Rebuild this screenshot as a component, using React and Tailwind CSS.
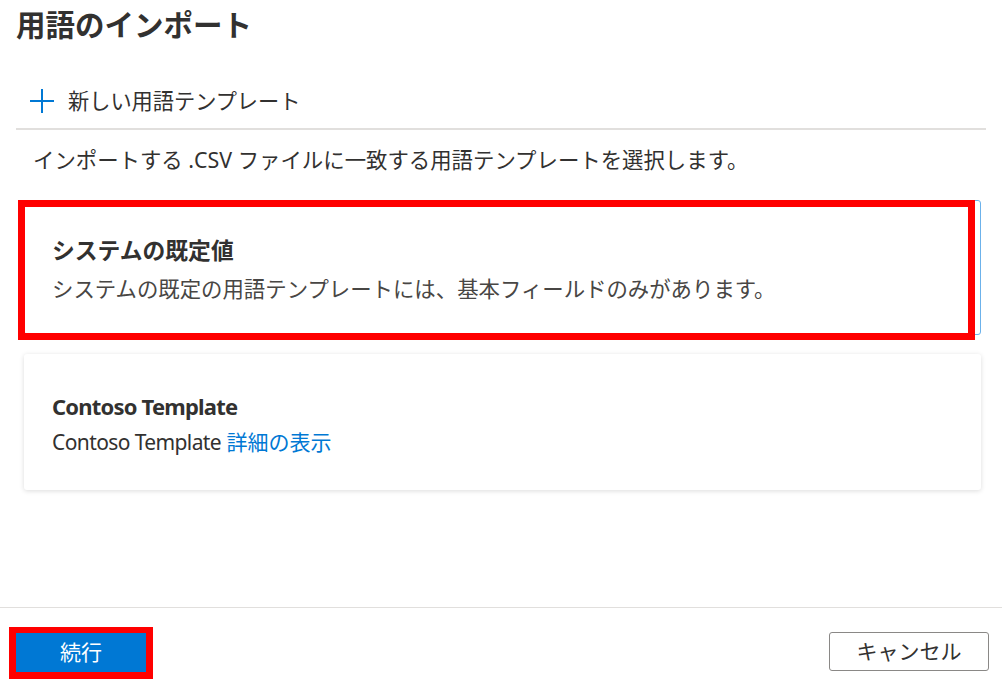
export default function App() {
  const font = { fontFamily: '"Noto Sans", "Noto Sans CJK JP", sans-serif' }

  return (
    <div
      className="w-[1002px] h-[700px] bg-white flex flex-col text-[#323130] overflow-hidden"
      style={font}
    >
      {/* Header */}
      <div className="px-4 pt-[5px]">
        <h1 className="text-[29.5px] leading-[40px] font-bold">用語のインポート</h1>
      </div>

      {/* New template */}
      <div className="mx-4 mt-[41px] border-b-2 border-[#e1dfdd] pb-[12px]">
        <button className="flex items-center gap-[14px] pl-[14px] h-[30px] text-[21.2px] text-[#323130]">
          <svg width="24" height="24" viewBox="0 0 24 24" className="shrink-0">
            <path d="M12 0v24M0 12h24" stroke="#0078d4" strokeWidth="2" fill="none" />
          </svg>
          <span className="leading-[30px]">新しい用語テンプレート</span>
        </button>
      </div>

      <p className="px-[33px] mt-[15px] text-[21.4px] leading-[30px] text-[#323130]">
        インポートする .CSV ファイルに一致する用語テンプレートを選択します。
      </p>

      {/* Cards */}
      <div className="pl-[24px] pr-[21px] mt-[25px] flex flex-col gap-[19px]">
        <div className="relative bg-white border border-[#6cb2eb] rounded-[3px] px-[27px] pt-[35px] pb-[30px]">
          <div className="text-[22.8px] leading-[30px] font-bold">システムの既定値</div>
          <div className="text-[21.4px] leading-[30px] mt-[8px] text-[#484644]">
            システムの既定の用語テンプレートには、基本フィールドのみがあります。
          </div>
          <div className="absolute left-[-7px] right-[5px] top-[-1px] bottom-[-6px] border-[7px] border-[#ff0000] pointer-events-none" />
        </div>

        <div className="bg-white rounded-[3px] shadow-[0_1px_5px_rgba(0,0,0,0.14)] px-[28px] pt-[37px] pb-[33px]">
          <div className="text-[22px] leading-[30px] font-bold tracking-[-0.8px]">Contoso Template</div>
          <div className="text-[21px] leading-[30px] mt-[6px] text-[#323130]">
            <span className="tracking-[-0.6px]">Contoso Template</span>{' '}
            <span className="text-[#0078d4]">詳細の表示</span>
          </div>
        </div>
      </div>

      {/* Footer */}
      <div className="mt-auto border-t border-[#e1dfdd] h-[93px] flex items-start justify-between pl-[9px] pr-[13px] pt-[19px]">
        <div className="border-[7px] border-[#ff0000] border-t-[6px]">
          <button className="w-[130px] h-[39px] bg-[#0078d4] text-white text-[21px] leading-[39px]">
            続行
          </button>
        </div>
        <button className="mt-[5px] w-[160px] h-[39px] border border-[#8a8886] rounded-[3px] text-[21px] text-[#323130] bg-white">
          キャンセル
        </button>
      </div>
    </div>
  )
}
